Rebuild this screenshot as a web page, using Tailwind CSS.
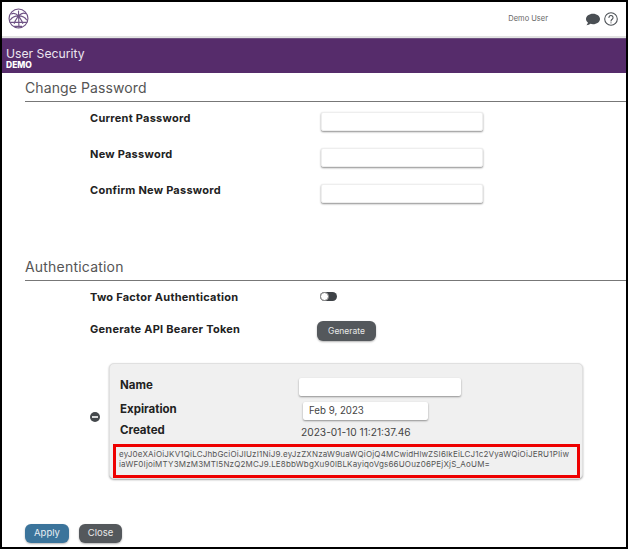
<!DOCTYPE html>
<html>
<head>
<meta charset="utf-8">
<script src="https://cdn.jsdelivr.net/npm/@tailwindcss/browser@4"></script>
</head>
<body class="bg-white font-['Inter','Liberation_Sans',sans-serif]">
<div class="w-[628px] h-[549px] border-2 border-black overflow-hidden flex flex-col bg-white">
  <!-- top bar -->
  <div class="h-[34px] flex items-center shrink-0">
    <svg class="w-[21px] h-[21px] ml-[6px] mt-[-1px]" viewBox="0 0 24 24" fill="none" stroke="#6f5385" stroke-width="1.300">
      <circle cx="12" cy="12" r="10.800"/>
      <path d="M12 9 C9 6 6 5.500 3.500 7 M12 9 C15 6 18 5 20.500 6.500 M12 9 C8 9 4.500 10.500 2.500 14 M12 9 C16 9 19.500 10.500 21.500 14 M12 9 C10 12 8 14 7 18 M12 9 C14 12 16 14 17 18 M12 3 L12.500 22.500 M2 16.500 L22 16.500 M7 21 L16 21"/>
    </svg>
    <span class="ml-auto mr-[38px] text-[7.500px] text-[#666] mt-[-1px]">Demo User</span>
    <svg class="w-[14px] h-[13px] mr-[4px]" viewBox="0 0 24 22" fill="#4a4f54"><path d="M12 1C5.400 1 0 5 0 10c0 2.400 1.300 4.600 3.300 6.200C3 18 2 19.700 .8 21c2.800-.3 5.200-1.500 6.800-2.700 1.400.4 2.900.7 4.400.7 6.600 0 12-4 12-9S18.600 1 12 1z"/></svg>
    <svg class="w-[14px] h-[14px] mr-[8px]" viewBox="0 0 24 24" fill="none" stroke="#4a4f54" stroke-width="1.800"><circle cx="12" cy="12" r="10.800"/><path d="M8.500 9.500a3.500 3.500 0 1 1 5.500 2.900c-1.300.9-2 1.600-2 3.100" stroke-linecap="round"/><circle cx="12" cy="18.500" r="1" fill="#4a4f54" stroke="none"/></svg>
  </div>
  <div class="h-[2px] bg-[#e2e2e2] shrink-0"></div>
  <!-- title band -->
  <div class="h-[35px] bg-[#562c6b] border-t border-[#6d5280] shrink-0 pl-[4px] pt-[7px] text-white">
    <div class="text-[12.200px] leading-[15px] text-[#ece6ef]">User Security</div>
    <div class="text-[8.500px] leading-[9px] font-extrabold">DEMO</div>
  </div>

  <div class="pl-[23px] flex-1 flex flex-col">
    <h2 class="text-[14px] leading-[18px] tracking-[0.1px] text-[#555] mt-[6px] pb-[4px] border-b border-[#777]">Change Password</h2>
    <div class="pl-[65px] pt-[9px] flex flex-col gap-[16px]">
      <div class="flex h-[20px]">
        <span class="w-[231px] text-[11px] tracking-[0.25px] font-bold text-[#222] leading-[14px]">Current Password</span>
        <div class="w-[162px] h-[19px] mt-[1px] bg-white rounded-[2px] border border-[#eee] shadow-[0_1px_2px_rgba(0,0,0,0.45)]"></div>
      </div>
      <div class="flex h-[20px]">
        <span class="w-[231px] text-[11px] tracking-[0.25px] font-bold text-[#222] leading-[14px]">New Password</span>
        <div class="w-[162px] h-[19px] mt-[1px] bg-white rounded-[2px] border border-[#eee] shadow-[0_1px_2px_rgba(0,0,0,0.45)]"></div>
      </div>
      <div class="flex h-[20px]">
        <span class="w-[231px] text-[11px] tracking-[0.25px] font-bold text-[#222] leading-[14px]">Confirm New Password</span>
        <div class="w-[162px] h-[19px] mt-[1px] bg-white rounded-[2px] border border-[#eee] shadow-[0_1px_2px_rgba(0,0,0,0.45)]"></div>
      </div>
    </div>

    <h2 class="text-[14px] leading-[18px] tracking-[0.2px] text-[#555] mt-[55px] pb-[4px] border-b border-[#777]">Authentication</h2>
    <div class="pl-[65px] pt-[9px]">
      <div class="flex h-[20px] items-start">
        <span class="w-[230px] text-[11px] tracking-[0.25px] font-bold text-[#222] leading-[14px]">Two Factor Authentication</span>
        <div class="relative w-[17px] h-[9px] mt-[2px] rounded-full bg-[#3f4347]">
          <div class="absolute left-0 top-0 w-[9px] h-[9px] rounded-full bg-white border border-[#888]"></div>
        </div>
      </div>
      <div class="flex items-start mt-[11px]">
        <span class="w-[227px] text-[11px] tracking-[0.25px] font-bold text-[#222] leading-[14px] mt-[1px]">Generate API Bearer Token</span>
        <button class="w-[59px] h-[20px] rounded-[6px] bg-[#54585c] text-[#e8e8e8] text-[8.500px] shadow-[0_1px_2px_rgba(0,0,0,0.3)]">Generate</button>
      </div>

      <!-- token card -->
      <div class="flex items-center mt-[22px]">
        <svg class="w-[10px] h-[10px] shrink-0 mt-[-8px]" viewBox="0 0 10 10"><circle cx="5" cy="5" r="5" fill="#44484c"/><rect x="2" y="4.200" width="6" height="1.600" fill="#fff"/></svg>
        <div class="ml-[9px] w-[474px] h-[116px] rounded-[5px] bg-[#f0f0f0] border border-[#e0e0e0] shadow-[0_1px_2px_rgba(0,0,0,0.35)] pt-[14px] px-[10px] relative">
          <div class="flex h-[20px]">
            <span class="w-[179px] text-[11.500px] font-bold text-[#222] leading-[15px]">Name</span>
            <div class="w-[162px] h-[18px] bg-white rounded-[2px] shadow-[0_1px_2px_rgba(0,0,0,0.4)]"></div>
          </div>
          <div class="flex h-[24px] mt-[4px]">
            <span class="w-[183px] text-[11.500px] font-bold text-[#222] leading-[15px]">Expiration</span>
            <div class="w-[125px] h-[18px] bg-white rounded-[2px] shadow-[0_1px_2px_rgba(0,0,0,0.4)] pl-[6px] text-[9.700px] leading-[18px] text-[#444]">Feb 9, 2023</div>
          </div>
          <div class="flex h-[18px] mt-[-3px]">
            <span class="w-[181px] text-[11.500px] font-bold text-[#222] leading-[15px]">Created</span>
            <span class="text-[10.200px] text-[#444] leading-[18px]">2023-01-10 11:21:37.46</span>
          </div>
          <div class="absolute left-[3px] top-[80px] w-[467px] h-[34px] border-[3px] border-[#ee0000] pl-[3px] pt-[2px] text-[8px] tracking-[0.18px] leading-[10px] text-[#555] whitespace-nowrap">
            <div>eyJ0eXAiOiJKV1QiLCJhbGciOiJIUzI1NiJ9.eyJzZXNzaW9uaWQiOjQ4MCwidHlwZSI6IkEiLCJ1c2VyaWQiOiJERU1PIiw</div>
            <div>iaWF0IjoiMTY3MzM3MTI5NzQ2MCJ9.LE8bbWbgXu90lBLKayiqoVgs66UOuz06PEjXjS_AoUM=</div>
          </div>
        </div>
      </div>
    </div>

    <div class="flex gap-[10px] mt-auto mb-[4px]">
      <button class="w-[44px] h-[19px] rounded-[6px] bg-[#3b749b] text-[#e8eef2] text-[9.500px] shadow-[0_1px_2px_rgba(0,0,0,0.3)]">Apply</button>
      <button class="w-[43px] h-[19px] rounded-[6px] bg-[#54585c] text-[#e8e8e8] text-[9.500px] shadow-[0_1px_2px_rgba(0,0,0,0.3)]">Close</button>
    </div>
  </div>
</div>
</body>
</html>
